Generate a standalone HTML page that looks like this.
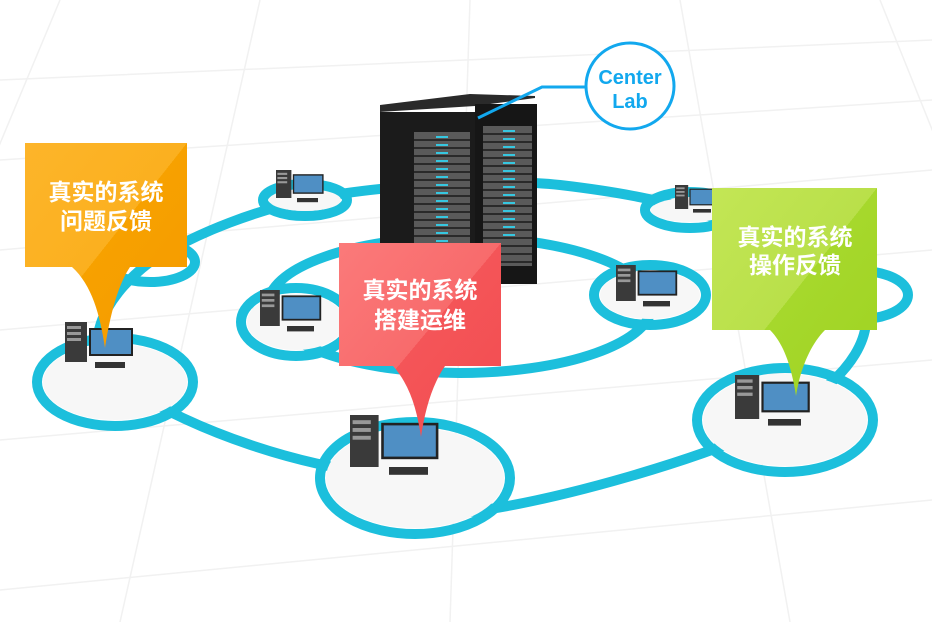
<!DOCTYPE html>
<html><head><meta charset="utf-8"><style>
html,body{margin:0;padding:0;background:#fff;}
svg{display:block}
text{font-family:"Liberation Sans","Noto Sans CJK SC",sans-serif;font-weight:bold;}
</style></head><body>
<svg width="932" height="622" viewBox="0 0 932 622" xmlns="http://www.w3.org/2000/svg">
<defs>
<linearGradient id="og" x1="0" y1="0" x2="1" y2="1"><stop offset="0" stop-color="#fdb52a"/><stop offset="0.5" stop-color="#fbb01f"/><stop offset="0.5" stop-color="#f7a100"/><stop offset="1" stop-color="#f59a00"/></linearGradient>
<linearGradient id="rg" x1="0" y1="0" x2="1" y2="1"><stop offset="0" stop-color="#fb7a7a"/><stop offset="0.5" stop-color="#f86b6c"/><stop offset="0.5" stop-color="#f45558"/><stop offset="1" stop-color="#f24c50"/></linearGradient>
<linearGradient id="gg" x1="0" y1="0" x2="1" y2="1"><stop offset="0" stop-color="#c3e655"/><stop offset="0.5" stop-color="#b9e04a"/><stop offset="0.5" stop-color="#a6d82c"/><stop offset="1" stop-color="#9fd322"/></linearGradient>
<g id="pc">
<rect x="0" y="0" width="22" height="40" fill="#3a3a3a"/>
<rect x="2" y="4" width="14" height="3" fill="#999"/><rect x="2" y="10" width="14" height="3" fill="#999"/><rect x="2" y="16" width="14" height="3" fill="#999"/>
<rect x="24" y="6" width="44" height="28" fill="#222"/><rect x="26" y="8" width="40" height="24" fill="#4f8fc4"/>
<rect x="30" y="40" width="30" height="6" fill="#333"/>
</g>
</defs>
<rect width="932" height="622" fill="#fff"/>
<g stroke="#f1f1f1" stroke-width="1.5" fill="none">
<path d="M0 250 L932 170 M0 330 L932 250 M0 440 L932 360 M0 590 L932 500 M0 160 L932 100 M0 80 L932 40"/>
<path d="M60 0 L-200 622 M260 0 L120 622 M470 0 L450 622 M680 0 L790 622 M880 0 L1130 622"/>
</g>
<g fill="none" stroke="#1cbfdc" stroke-width="10">
<path d="M150 262 C200 230 260 210 305 200 C380 185 500 178 560 185 C620 192 660 200 690 210 C760 232 830 260 860 295 C880 330 850 380 790 410 M785 420 C700 460 560 500 470 512 M415 478 C300 470 190 430 115 380 C80 350 100 300 150 262"/>
<ellipse cx="460" cy="305" rx="192" ry="68"/>
<ellipse cx="305" cy="200" rx="42" ry="16"/>
<ellipse cx="150" cy="262" rx="45" ry="20"/>
<ellipse cx="115" cy="382" rx="78" ry="44"/>
<ellipse cx="296" cy="322" rx="55" ry="34"/>
<ellipse cx="415" cy="478" rx="95" ry="56"/>
<ellipse cx="650" cy="295" rx="56" ry="30"/>
<ellipse cx="690" cy="210" rx="45" ry="18"/>
<ellipse cx="860" cy="295" rx="48" ry="24"/>
<ellipse cx="785" cy="420" rx="88" ry="52"/>
</g>
<g fill="#f7f7f7">
<ellipse cx="305" cy="200" rx="36" ry="11"/><ellipse cx="115" cy="382" rx="72" ry="38"/><ellipse cx="296" cy="322" rx="49" ry="28"/><ellipse cx="415" cy="478" rx="89" ry="50"/><ellipse cx="650" cy="295" rx="50" ry="24"/><ellipse cx="690" cy="210" rx="39" ry="12"/><ellipse cx="785" cy="420" rx="82" ry="46"/>
</g>
<use href="#pc" transform="translate(276,170) scale(0.7)"/>
<use href="#pc" transform="translate(260,290) scale(0.9)"/>
<use href="#pc" transform="translate(350,415) scale(1.3)"/>
<use href="#pc" transform="translate(616,265) scale(0.9)"/>
<use href="#pc" transform="translate(675,185) scale(0.6)"/>
<use href="#pc" transform="translate(735,375) scale(1.1)"/>
<use href="#pc" transform="translate(65,322) scale(1)"/>
<polygon points="380,112 475,106 535,98 535,96 470,94 380,105" fill="#2a2a2a"/>
<rect x="380" y="112" width="95" height="180" fill="#1b1b1b"/>
<rect x="475" y="104" width="62" height="180" fill="#161616"/>
<rect x="414" y="132" width="56" height="150" fill="#5a5a5a"/>
<rect x="483" y="126" width="49" height="140" fill="#5a5a5a"/>
<g stroke="#2a2a2a" stroke-width="2">
<path d="M414 140H470M414 148H470M414 156H470M414 164H470M414 172H470M414 180H470M414 188H470M414 196H470M414 204H470M414 212H470M414 220H470M414 228H470M414 236H470M414 244H470M414 252H470M414 260H470M414 268H470"/>
<path d="M483 134H532M483 142H532M483 150H532M483 158H532M483 166H532M483 174H532M483 182H532M483 190H532M483 198H532M483 206H532M483 214H532M483 222H532M483 230H532M483 238H532M483 246H532M483 254H532M483 262H532"/>
</g>
<g stroke="#36c7e0" stroke-width="2">
<path d="M436 137h12M436 145h12M436 153h12M436 161h12M436 169h12M436 177h12M436 185h12M436 193h12M436 201h12M436 209h12M436 217h12M436 225h12M436 233h12M436 241h12M436 249h12M436 257h12"/>
<path d="M503 131h12M503 139h12M503 147h12M503 155h12M503 163h12M503 171h12M503 179h12M503 187h12M503 195h12M503 203h12M503 211h12M503 219h12M503 227h12M503 235h12"/>
</g>
<path d="M478 118 L542 87 L586 87" fill="none" stroke="#12a8ee" stroke-width="3"/>
<ellipse cx="630" cy="86" rx="44" ry="43" fill="#fff" stroke="#12a8ee" stroke-width="3"/>
<text x="630" y="84" text-anchor="middle" font-size="20" fill="#12a8ee" font-family="Liberation Sans Narrow, sans-serif">Center</text>
<text x="630" y="108" text-anchor="middle" font-size="20" fill="#12a8ee" font-family="Liberation Sans Narrow, sans-serif">Lab</text>
<path d="M25 143 H187 V267 H130 C118 285 110 315 105 348 C100 315 92 285 72 267 H25 Z" fill="url(#og)"/>
<text x="106" y="200" text-anchor="middle" font-size="23" fill="#fff">真实的系统</text>
<text x="106" y="229" text-anchor="middle" font-size="23" fill="#fff">问题反馈</text>
<path d="M339 243 H501 V366 H445 C432 385 425 410 421 437 C417 410 410 385 393 366 H339 Z" fill="url(#rg)"/>
<text x="420" y="298" text-anchor="middle" font-size="23" fill="#fff">真实的系统</text>
<text x="420" y="328" text-anchor="middle" font-size="23" fill="#fff">搭建运维</text>
<path d="M712 188 H877 V330 H825 C810 345 800 370 796 396 C792 370 785 345 770 330 H712 Z" fill="url(#gg)"/>
<text x="795" y="245" text-anchor="middle" font-size="23" fill="#fff">真实的系统</text>
<text x="795" y="273" text-anchor="middle" font-size="23" fill="#fff">操作反馈</text>
</svg>
</body></html>
